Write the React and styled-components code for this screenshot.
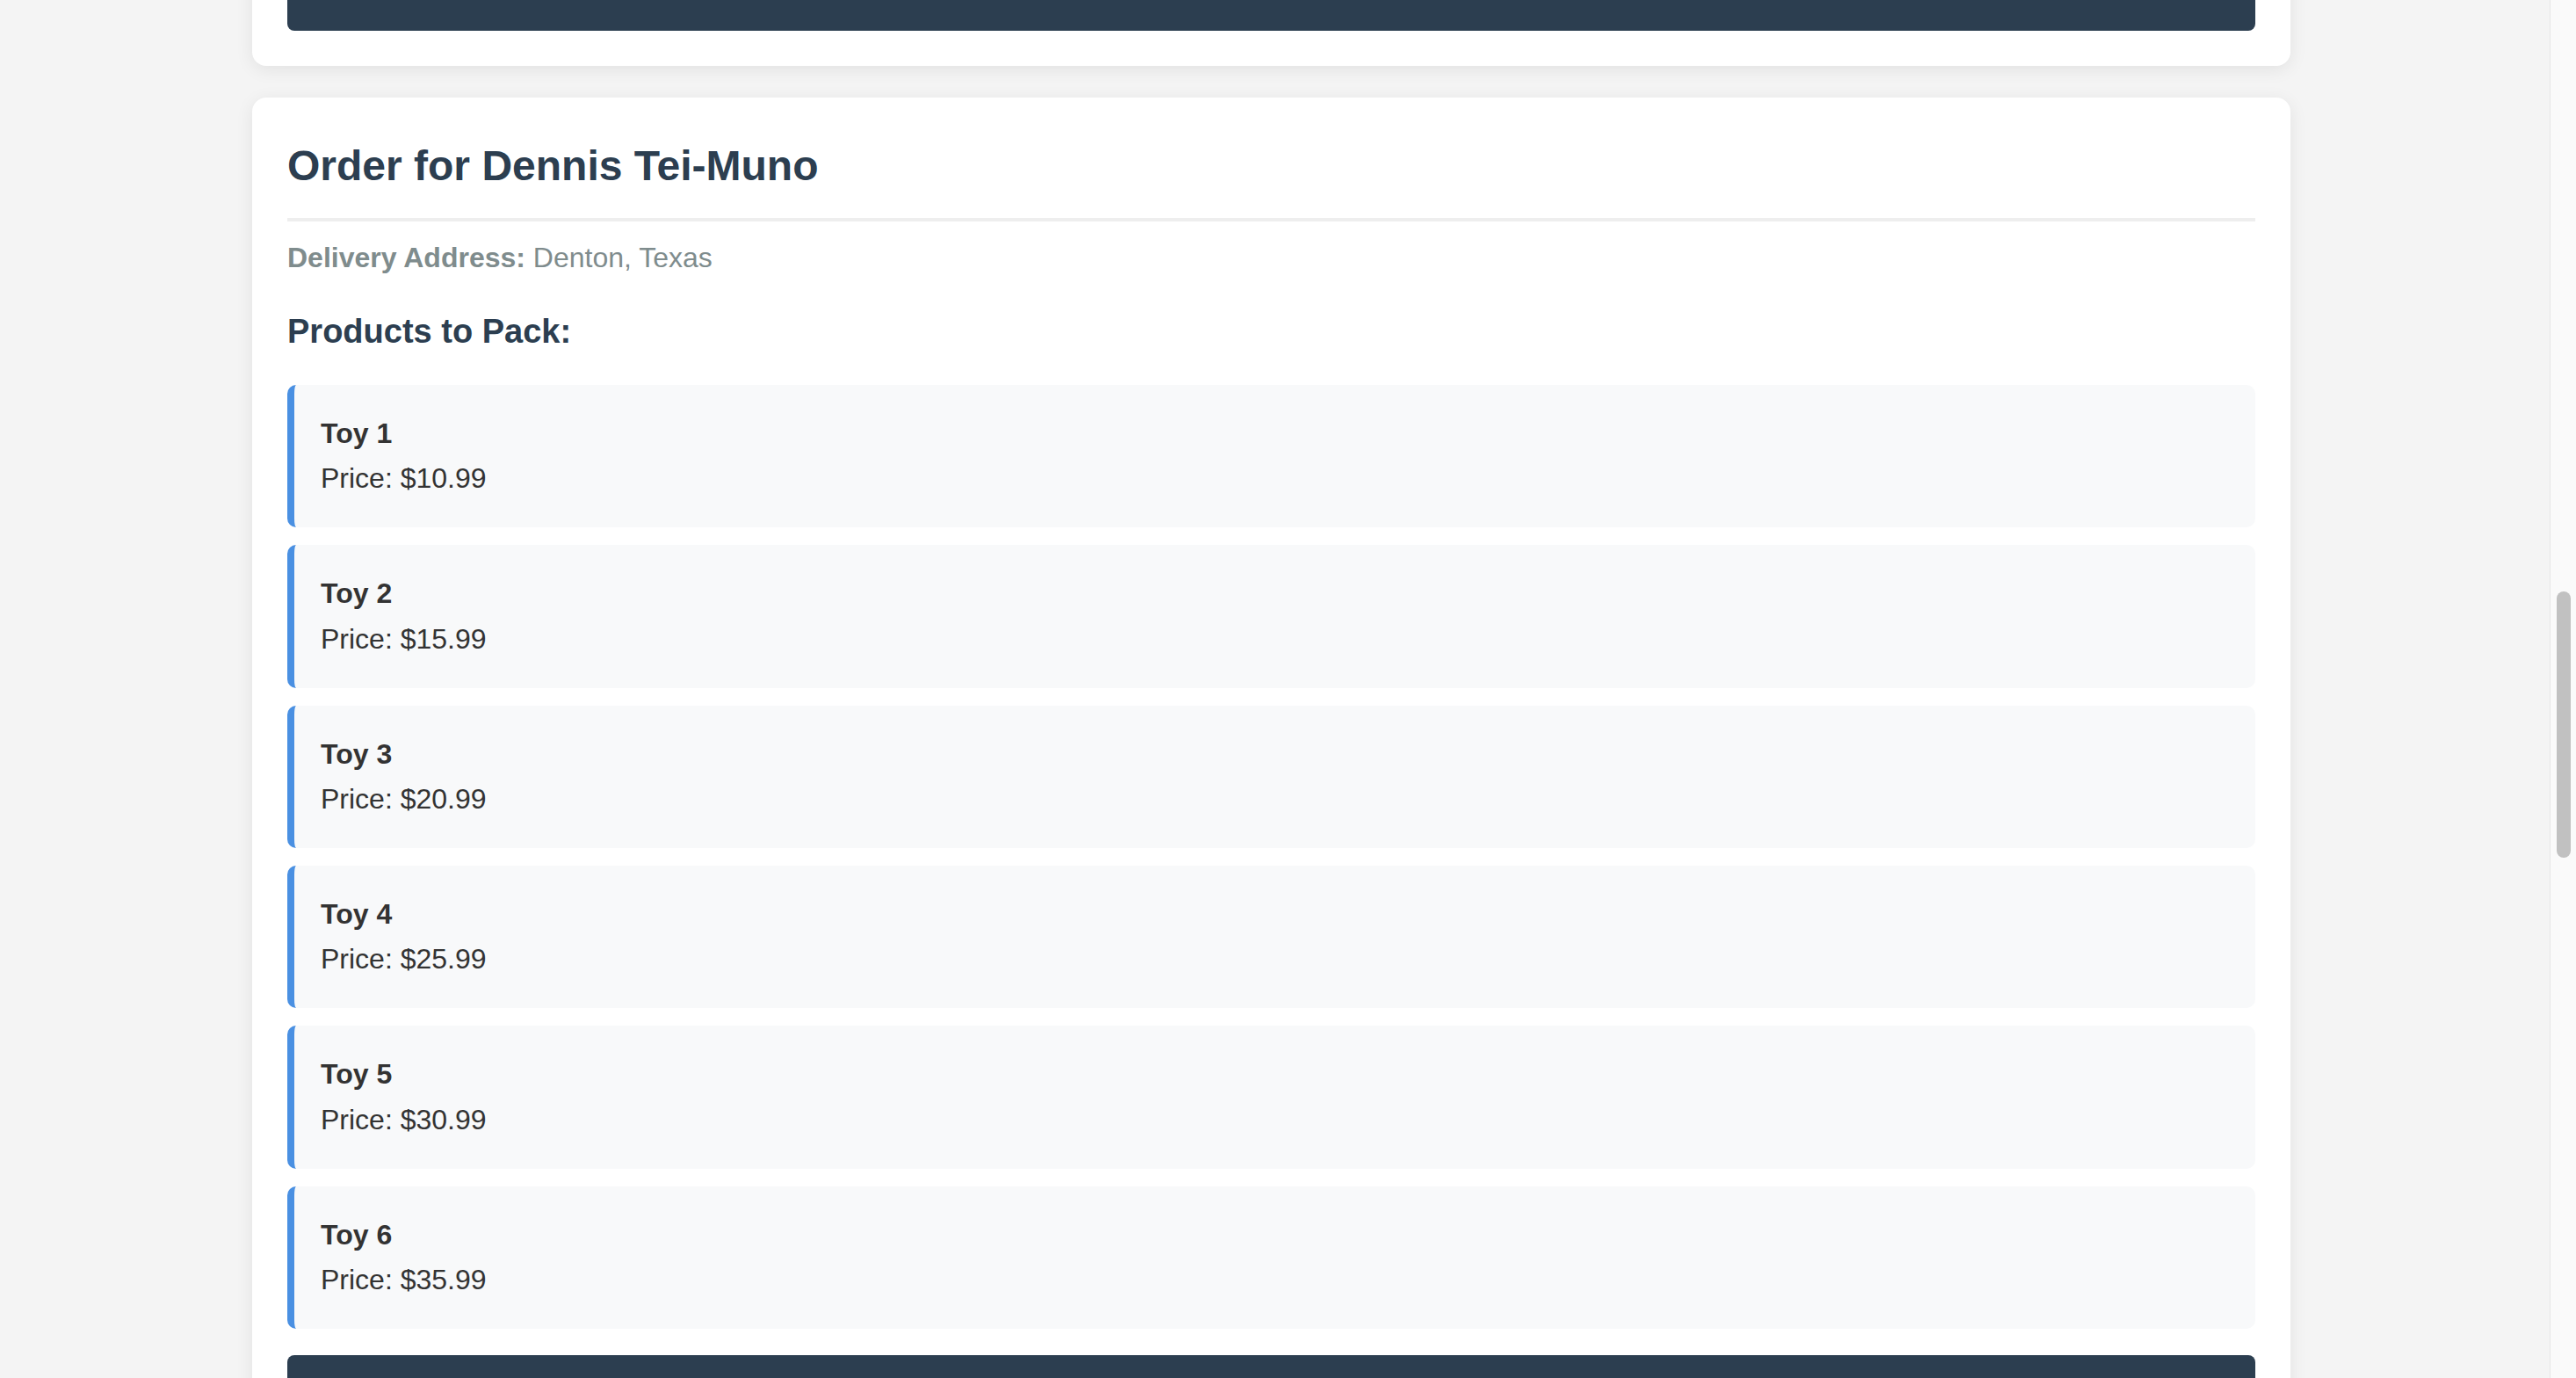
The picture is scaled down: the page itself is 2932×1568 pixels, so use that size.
import React, { useLayoutEffect, useRef } from "react";
import styled, { createGlobalStyle } from "styled-components";

const GlobalStyle = createGlobalStyle`
  html, body {
    margin: 0;
    padding: 0;
    height: 100%;
    overflow: hidden;
  }
  body {
    font-family: "Liberation Sans", Arial, Helvetica, sans-serif;
    line-height: 1.6;
    color: #333;
    background: #f4f4f4;
  }
  * {
    box-sizing: border-box;
  }
`;

const Screen = styled.div`
  display: flex;
  height: 100vh;
  background: #f4f4f4;
`;

const Scroller = styled.main`
  flex: 1;
  min-width: 0;
  overflow: hidden;
  padding-right: 8px;
`;

const ScrollRail = styled.div`
  position: relative;
  flex: 0 0 30px;
  background: #fafafa;
  border-left: 1px solid #e6e6e6;
`;

const ScrollThumb = styled.div`
  position: absolute;
  left: 7px;
  right: 6px;
  background: #c1c1c1;
  border-radius: 8px;
`;

const Container = styled.div`
  max-width: 2320px;
  margin: 0 auto;
  padding: 40px 0;
`;

const Card = styled.section`
  background: #fff;
  border-radius: 16px;
  box-shadow: 0 4px 20px rgba(0, 0, 0, 0.08);
  padding: 40px;
  margin-bottom: 36px;
`;

const Title = styled.h2`
  margin: 0;
  font-size: 48px;
  color: #2c3e50;
  padding-bottom: 20px;
  border-bottom: 4px solid #eee;
`;

const Address = styled.p`
  margin: 16px 0 0;
  font-size: 32px;
  color: #7f8c8d;

  strong {
    font-weight: bold;
  }
`;

const SectionTitle = styled.h3`
  margin: 28px 0 30px;
  font-size: 38px;
  color: #2c3e50;
`;

const ProductList = styled.ul`
  list-style: none;
  margin: 0;
  padding: 0;
`;

const Product = styled.li`
  background: #f8f9fa;
  border-left: 8px solid #4a90e2;
  border-radius: 10px;
  padding: 30px;
  margin-bottom: 20px;
  font-size: 32px;
  color: #333;
`;

const ProductName = styled.div`
  font-weight: bold;
`;

const ProductPrice = styled.div``;

const PackButton = styled.button`
  display: block;
  width: 100%;
  margin-top: ${(p) => (p.$first ? "0" : "30px")};
  padding: 24px 40px;
  background: #2c3e50;
  color: #fff;
  border: none;
  border-radius: 8px;
  font-family: inherit;
  font-size: 32px;
  font-weight: bold;
  line-height: 1.6;
  cursor: pointer;
`;

const order = {
  customer: "Dennis Tei-Muno",
  address: "Denton, Texas",
  products: [
    { name: "Toy 1", price: 10.99 },
    { name: "Toy 2", price: 15.99 },
    { name: "Toy 3", price: 20.99 },
    { name: "Toy 4", price: 25.99 },
    { name: "Toy 5", price: 30.99 },
    { name: "Toy 6", price: 35.99 },
  ],
};

// where the page sits in the long list of orders
const scrollState = { offset: 3483, total: 8114, view: 1568 };

export default function App() {
  const scrollRef = useRef(null);
  const orderRef = useRef(null);

  useLayoutEffect(() => {
    if (scrollRef.current && orderRef.current) {
      scrollRef.current.scrollTop = orderRef.current.offsetTop - 111;
    }
  }, []);

  const thumbTop = (scrollState.offset / scrollState.total) * 100;
  const thumbHeight = (scrollState.view / scrollState.total) * 100;

  return (
    <>
      <GlobalStyle />
      <Screen>
        <Scroller ref={scrollRef} style={{ position: "relative" }}>
          <Container>
            <Card>
              <PackButton type="button" $first>
                Mark as Packed
              </PackButton>
            </Card>
            <Card ref={orderRef}>
              <Title>Order for {order.customer}</Title>
              <Address>
                <strong>Delivery Address:</strong> {order.address}
              </Address>
              <SectionTitle>Products to Pack:</SectionTitle>
              <ProductList>
                {order.products.map((p) => (
                  <Product key={p.name}>
                    <ProductName>{p.name}</ProductName>
                    <ProductPrice>Price: ${p.price.toFixed(2)}</ProductPrice>
                  </Product>
                ))}
              </ProductList>
              <PackButton type="button">Mark as Packed</PackButton>
            </Card>
          </Container>
        </Scroller>
        <ScrollRail>
          <ScrollThumb
            style={{ top: `${thumbTop}%`, height: `${thumbHeight}%` }}
          />
        </ScrollRail>
      </Screen>
    </>
  );
}
